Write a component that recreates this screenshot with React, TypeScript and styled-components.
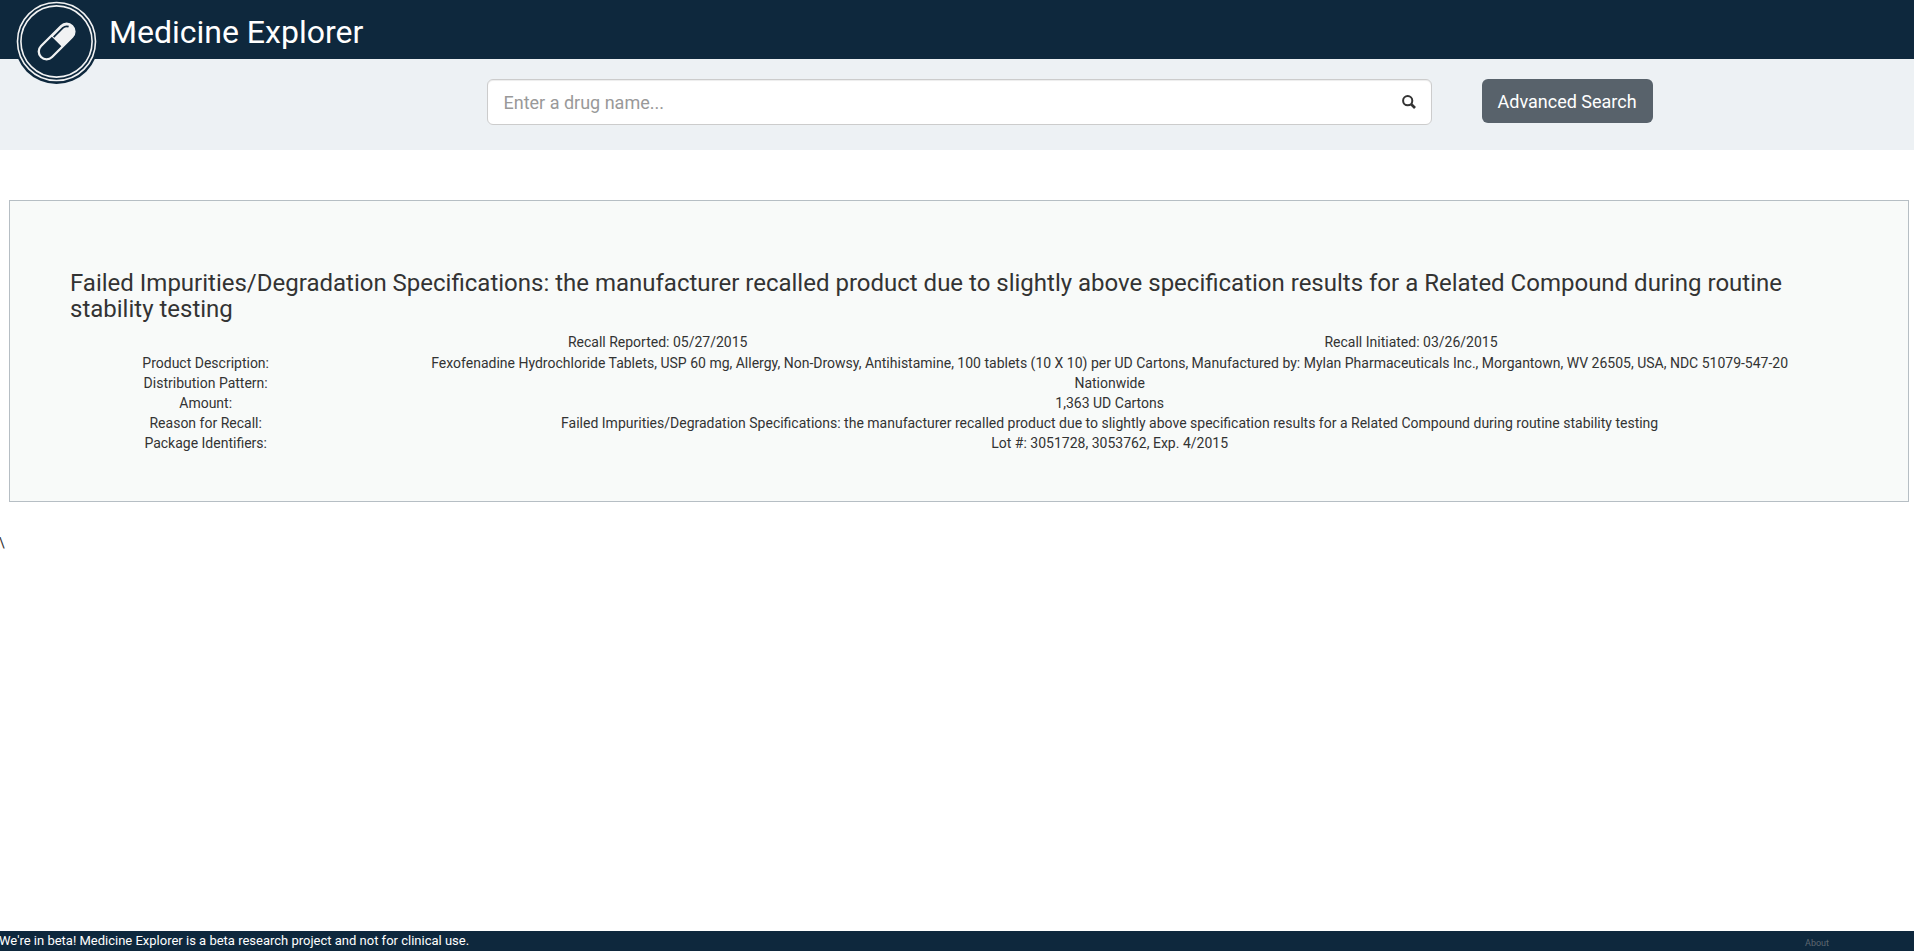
import React from "react";
import styled, { createGlobalStyle } from "styled-components";

const GlobalStyle = createGlobalStyle`
  *, *::before, *::after { box-sizing: border-box; }
  body {
    margin: 0;
    background: #fff;
    color: #333;
    font: 14px/20px Roboto, "Liberation Sans", sans-serif;
  }
`;

const Page = styled.div`
  display: flex;
  flex-direction: column;
  min-height: 100vh;
`;

const Header = styled.header`
  display: flex;
  align-items: flex-start;
  gap: 9px;
  height: 59px;
  padding-left: 14px;
  background: #0e283d;
  color: #fff;
`;

const Logo = styled.svg`
  position: relative;
  flex: none;
  width: 86px;
  height: 84px;
`;

const Brand = styled.h1`
  margin: 0;
  font-size: 32px;
  line-height: 64px;
  font-weight: 400;
`;

const SearchBar = styled.form`
  display: grid;
  grid-template-columns: 1fr 2fr 1fr;
  height: 91px;
  padding-top: 20px;
  background: #edf1f4;
`;

const SearchField = styled.div`
  display: flex;
  grid-column: 2;
  height: 46px;
  margin: 0 4px 0 8px;
  border: 1px solid #ccc;
  border-radius: 6px;
  background: #fff;
  box-shadow: inset 0 1px 1px rgba(0, 0, 0, 0.075);
`;

const SearchInput = styled.input`
  flex: 1;
  min-width: 0;
  padding: 2px 16px 0;
  border: 0;
  outline: 0;
  background: transparent;
  color: #555;
  font: inherit;
  font-size: 18px;
  &::placeholder { color: #999; opacity: 1; }
`;

const IconButton = styled.button`
  display: flex;
  align-items: center;
  padding: 0 15px;
  border: 0;
  background: transparent;
  color: #333;
`;

const AdvancedButton = styled.button`
  justify-self: start;
  height: 44px;
  margin-left: 46px;
  padding: 2px 16px 0;
  border: 0;
  border-radius: 6px;
  background: #58626b;
  color: #fff;
  font: inherit;
  font-size: 18px;
`;

const Card = styled.main`
  margin: 50px 5px 31px 9px;
  padding: 69px 60px 48px;
  border: 1px solid #b6bec4;
  background: #f8faf9;
`;

const Title = styled.h3`
  margin: 0 0 10px;
  font-size: 24px;
  line-height: 26px;
  font-weight: 400;
`;

const Dates = styled.div`
  display: grid;
  grid-template-columns: 3fr 10fr 10fr 1fr;
  margin: 0 -15px 1px;
  text-align: center;
`;

const DateItem = styled.div<{ $column: number }>`
  grid-column: ${(p) => p.$column};
`;

const Details = styled.dl`
  display: grid;
  grid-template-columns: 1fr 5fr;
  margin: 0 -15px;
  text-align: center;
`;

const Term = styled.dt``;

const Value = styled.dd`
  margin: 0;
`;

const Stray = styled.div`
  flex: 1;
  margin-left: -1px;
`;

const Footer = styled.footer`
  display: flex;
  justify-content: space-between;
  height: 20px;
  padding-right: 85px;
  background: #0e283d;
  color: #fff;
  font-size: 13px;
`;

const BetaNote = styled.span`
  margin-left: -1px;
`;

const AboutLink = styled.a`
  color: #5d6770;
  font-size: 9px;
  line-height: 24px;
  text-decoration: none;
`;

const details = [
  [
    "Product Description:",
    "Fexofenadine Hydrochloride Tablets, USP 60 mg, Allergy, Non-Drowsy, Antihistamine, 100 tablets (10 X 10) per UD Cartons, Manufactured by: Mylan Pharmaceuticals Inc., Morgantown, WV 26505, USA, NDC 51079-547-20",
  ],
  ["Distribution Pattern:", "Nationwide"],
  ["Amount:", "1,363 UD Cartons"],
  [
    "Reason for Recall:",
    "Failed Impurities/Degradation Specifications: the manufacturer recalled product due to slightly above specification results for a Related Compound during routine stability testing",
  ],
  ["Package Identifiers:", "Lot #: 3051728, 3053762, Exp. 4/2015"],
];

function PillLogo() {
  return (
    <Logo viewBox="0 0 86 84" aria-hidden="true">
      <circle cx="42.5" cy="42" r="42" fill="#0e283d" />
      <g fill="none" stroke="#f1f2f3">
        <circle cx="42.5" cy="41.5" r="39" strokeWidth="1.6" />
        <circle cx="42.5" cy="41.5" r="35.6" strokeWidth="1.6" />
      </g>
      <g transform="translate(42.6 41.5) rotate(-45)">
        <rect x="-22" y="-7.8" width="44" height="15.6" rx="7.8" fill="none" stroke="#f1f2f3" strokeWidth="2.3" />
        <path d="M0-7.8H14.2A7.8 7.8 0 0 1 14.2 7.8H0Z" fill="#f1f2f3" />
        <path d="M1-5.2H14Q17.6-5 19-2" fill="none" stroke="#0e283d" strokeWidth="1.8" />
      </g>
    </Logo>
  );
}

export default function App() {
  return (
    <>
      <GlobalStyle />
      <Page>
        <Header>
          <PillLogo />
          <Brand>Medicine Explorer</Brand>
        </Header>
        <SearchBar onSubmit={(e) => e.preventDefault()}>
          <SearchField>
            <SearchInput type="text" aria-label="Drug name" placeholder="Enter a drug name..." />
            <IconButton type="submit" aria-label="Search">
              <svg width="14" height="14" viewBox="0 0 14 14" fill="none" stroke="currentColor">
                <circle cx="5.7" cy="5.7" r="4.6" strokeWidth="2" />
                <path d="M9 9L13 13" strokeWidth="2.6" />
              </svg>
            </IconButton>
          </SearchField>
          <AdvancedButton type="button">Advanced Search</AdvancedButton>
        </SearchBar>
        <Card>
          <Title>
            Failed Impurities/Degradation Specifications: the manufacturer recalled product due to slightly above
            specification results for a Related Compound during routine stability testing
          </Title>
          <Dates>
            <DateItem $column={2}>Recall Reported: 05/27/2015</DateItem>
            <DateItem $column={3}>Recall Initiated: 03/26/2015</DateItem>
          </Dates>
          <Details>
            {details.map(([term, value]) => (
              <React.Fragment key={term}>
                <Term>{term}</Term>
                <Value>{value}</Value>
              </React.Fragment>
            ))}
          </Details>
        </Card>
        <Stray>\</Stray>
        <Footer>
          <BetaNote>We're in beta! Medicine Explorer is a beta research project and not for clinical use.</BetaNote>
          <AboutLink href="#about">About</AboutLink>
        </Footer>
      </Page>
    </>
  );
}
